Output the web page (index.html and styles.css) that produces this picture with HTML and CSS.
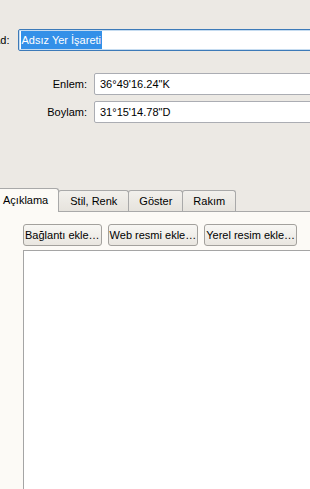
FILE: index.html
```html
<!DOCTYPE html>
<html lang="tr">
    <head>
        <meta charset="utf-8">
        <title>Yer İşareti</title>
        <link rel="stylesheet" href="styles.css">
    </head>
    <body>
        <div class="name-row">
            <label class="name-label">Ad:</label>
            <div class="field field-focus"><span class="selected">Adsız Yer İşareti</span></div>
        </div>

        <div class="coords">
            <label class="coord-label">Enlem:</label>
            <div class="field">36°49'16.24"K</div>
            <label class="coord-label">Boylam:</label>
            <div class="field">31°15'14.78"D</div>
        </div>

        <div class="tabs">
            <div class="tab active">Açıklama</div>
            <div class="tab wide">Stil, Renk</div>
            <div class="tab">Göster</div>
            <div class="tab">Rakım</div>
        </div>

        <section class="panel">
            <div class="toolbar">
                <button class="btn">Bağlantı ekle…</button>
                <button class="btn">Web resmi ekle…</button>
                <button class="btn">Yerel resim ekle…</button>
            </div>
            <div class="editor"></div>
        </section>
    </body>
</html>
```

FILE: styles.css
```css
body {
    font-family: 'Liberation Sans', Arial, sans-serif;
    font-size: 11px;
    color: #000;
    margin: 0;
    height: 489px;
    overflow: hidden;
    background-color: #ece9e4;
}

.name-row {
    display: flex;
    align-items: center;
    margin: 29px -40px 0 -7px;
}

.name-label {
    margin-right: 8px;
}

.field {
    flex: 1;
    box-sizing: border-box;
    height: 22px;
    line-height: 20px;
    padding: 0 5px;
    background-color: #fff;
    border: 1px solid #abadb3;
    border-radius: 2px;
    white-space: nowrap;
}

.field-focus {
    border-color: #3d7ab8;
    box-shadow: inset 0 0 0 1px #c6dcf0;
    padding: 1px 2px 0;
    line-height: 18px;
}

.selected {
    display: inline-block;
    padding: 0 1px;
    background-color: #3390e8;
    color: #fff;
}

.coords {
    display: grid;
    grid-template-columns: 87px 1fr;
    column-gap: 7px;
    row-gap: 6px;
    align-items: center;
    margin: 22px -40px 0 0;
}

.coord-label {
    text-align: right;
}

.tabs {
    display: flex;
    align-items: flex-end;
    margin: 65px 0 0 -8px;
}

.tab {
    box-sizing: border-box;
    height: 21px;
    line-height: 20px;
    padding: 0 10px;
    margin-right: -1px;
    border: 1px solid #a9a9a9;
    border-bottom: none;
    border-radius: 3px 3px 0 0;
    background: linear-gradient(#f2f0ec, #e6e3dd);
}

.tab.wide {
    padding: 0 11px;
}

.tab.active {
    height: 24px;
    line-height: 22px;
    margin-bottom: -1px;
    position: relative;
    z-index: 1;
    background: #fcfaf6;
}

.panel {
    background-color: #fcfaf6;
    border-top: 1px solid #a9a9a9;
    padding: 12px 0 0 23px;
    height: 300px;
}

.toolbar {
    display: flex;
    gap: 6px;
}

.btn {
    font-family: inherit;
    font-size: 11px;
    color: #000;
    height: 22px;
    padding: 0 1px;
    border: 1px solid #a3a19d;
    border-radius: 3px;
    background: linear-gradient(#f8f7f4, #e9e6e0);
}

.editor {
    margin-top: 4px;
    margin-right: -20px;
    height: 260px;
    background-color: #fff;
    border: 1px solid #a5a5a5;
}
```
